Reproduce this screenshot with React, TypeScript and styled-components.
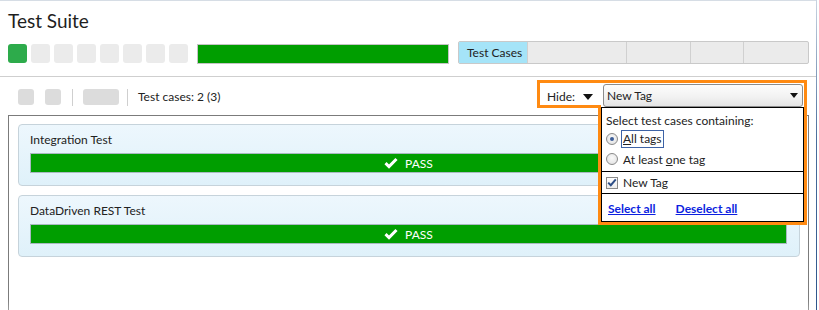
import styled, { createGlobalStyle } from "styled-components";

const STEPS = [true, false, false, false, false, false, false, false];

const TABS = [
  { label: "Test Cases", width: 69, active: true },
  { label: "", width: 99 },
  { label: "", width: 64 },
  { label: "", width: 53 },
  { label: "", width: 0 },
];

const TEST_CASES = ["Integration Test", "DataDriven REST Test"];

const ORANGE = "#ff8a12";

const GlobalStyle = createGlobalStyle`
  html, body {
    margin: 0;
    padding: 0;
    background: #fff;
  }
  body {
    color: #222;
    font-family: Lato, "Liberation Sans", sans-serif;
    overflow: hidden;
  }
`;

const Window = styled.div`
  background: #fff;
  display: flex;
  height: 310px;
  overflow: hidden;
  width: 819px;
`;

const Main = styled.div`
  border-top: 1px solid #d6dde5;
  flex-shrink: 0;
  width: 816px;
`;

const WindowEdge = styled.div`
  background: linear-gradient(to bottom, #c9d4e2, #4a6d9c 45%, #2e558c);
  flex-shrink: 0;
  width: 1px;
`;

const Header = styled.header`
  border-bottom: 1px solid #cfcfcf;
  padding: 8px 7px 12px 8px;
`;

const Title = styled.h1`
  color: #1e1e1e;
  font-size: 19px;
  font-weight: 400;
  line-height: 23px;
  margin: 0;
`;

const SummaryRow = styled.div`
  align-items: flex-end;
  display: flex;
  height: 23px;
  margin-top: 9px;
`;

const StepList = styled.div`
  display: flex;
  gap: 4px;
`;

const Step = styled.div<{ $done?: boolean }>`
  background: ${({ $done }) => ($done ? "#2dab4b" : "#ebebeb")};
  border-radius: 3px;
  height: 19px;
  margin-bottom: 1px;
  width: 19px;
`;

const ProgressBar = styled.div`
  background: #009e00;
  border: 1px solid #c4c4c4;
  box-sizing: border-box;
  height: 20px;
  margin-left: 9px;
  width: 252px;
`;

const Tabs = styled.div`
  background: #ebebeb;
  border: 1px solid #c9c9c9;
  border-radius: 2px;
  box-sizing: border-box;
  display: flex;
  flex: 1;
  height: 23px;
  margin-left: 9px;
  overflow: hidden;
`;

const Tab = styled.div<{ $active?: boolean; $width: number }>`
  background: ${({ $active }) => ($active ? "#a5e4f8" : "transparent")};
  border-right: 1px solid #d0d0d0;
  box-sizing: border-box;
  flex: ${({ $width }) => ($width ? `0 0 ${$width}px` : "1")};
  font-size: 12px;
  line-height: 21px;
  padding-left: 8px;
  &:last-child {
    border-right: none;
  }
`;

const Toolbar = styled.div`
  display: flex;
  height: 28px;
  margin-top: 3px;
  padding: 0 9px 0 18px;
  position: relative;
  z-index: 2;
`;

const LeftTools = styled.div`
  align-items: center;
  display: flex;
  padding-top: 6px;
`;

const ToolButton = styled.div<{ $wide?: boolean }>`
  background: #dcdcdc;
  border-radius: 3px;
  height: 16px;
  margin-right: ${({ $wide }) => ($wide ? "8px" : "11px")};
  width: ${({ $wide }) => ($wide ? "36px" : "16px")};
`;

const ToolSeparator = styled.div`
  background: #cfcfcf;
  height: 17px;
  margin-right: 10px;
  width: 1px;
`;

const CountText = styled.span`
  font-size: 12px;
  line-height: 16px;
  margin-left: 0;
`;

const HideControl = styled.div`
  align-items: flex-start;
  border: 3px solid ${ORANGE};
  border-bottom: none;
  box-sizing: border-box;
  display: flex;
  height: 28px;
  margin-left: auto;
  padding-left: 7px;
  position: relative;
  width: 270px;
  &::after {
    background: ${ORANGE};
    bottom: 0;
    content: "";
    height: 3px;
    left: -3px;
    position: absolute;
    width: 64px;
  }
`;

const HideLabel = styled.span`
  font-size: 12px;
  line-height: 16px;
  margin-top: 6px;
`;

const Caret = styled.span<{ $size: number }>`
  border-left: ${({ $size }) => $size}px solid transparent;
  border-right: ${({ $size }) => $size}px solid transparent;
  border-top: ${({ $size }) => Math.round($size * 1.2)}px solid #111;
  height: 0;
  width: 0;
`;

const HideCaret = styled.span`
  display: flex;
  margin-left: 8px;
  margin-top: 11px;
`;

const Select = styled.div`
  align-items: center;
  background: linear-gradient(to bottom, #fdfdfd, #f1f1f1 60%, #e4e4e4);
  border: 1px solid #8c8c8c;
  border-radius: 3px;
  box-sizing: border-box;
  display: flex;
  font-size: 12px;
  height: 23px;
  justify-content: space-between;
  margin-left: 10px;
  margin-top: 1px;
  padding: 0 4px 0 3px;
  width: 200px;
`;

const Popup = styled.div`
  background: #fff;
  border: 3px solid ${ORANGE};
  border-top: none;
  left: 58px;
  position: absolute;
  right: -3px;
  top: 24px;
`;

const PopupPanel = styled.div`
  border: 1px solid #000;
  font-size: 12px;
`;

const PopupSection = styled.div`
  border-bottom: 1px solid #000;
  padding: 5px 4px 2px 4px;
  &:last-child {
    border-bottom: none;
  }
`;

const PopupHeading = styled.div`
  line-height: 16px;
`;

const OptionRow = styled.label`
  align-items: center;
  display: flex;
  gap: 5px;
  height: 20px;
`;

const CheckRow = styled(OptionRow)`
  height: 21px;
`;

const Radio = styled.span<{ $checked?: boolean }>`
  align-items: center;
  background: radial-gradient(circle at 50% 40%, #fafafa, #dedede);
  border: 1px solid #8a8a8a;
  border-radius: 50%;
  box-sizing: border-box;
  display: flex;
  height: 12px;
  justify-content: center;
  width: 12px;
  &::after {
    background: ${({ $checked }) => ($checked ? "#3b5d98" : "transparent")};
    border-radius: 50%;
    content: "";
    height: 4px;
    width: 4px;
  }
`;

const FocusLabel = styled.span`
  border: 1px solid #3d63a6;
  line-height: 16px;
  margin-left: -2px;
  padding: 0 1px;
`;

const CheckBox = styled.span`
  align-items: center;
  background: linear-gradient(to bottom, #fff, #ececec);
  border: 1px solid #8a8a8a;
  box-sizing: border-box;
  display: flex;
  height: 12px;
  justify-content: center;
  width: 12px;
`;

const LinkRow = styled.div`
  display: flex;
  gap: 20px;
  line-height: 16px;
  padding: 7px 6px 4px;
`;

const Link = styled.a`
  color: #0c1fe0;
  cursor: pointer;
  font-weight: 700;
  text-decoration: underline;
`;

const Panel = styled.div`
  border: 1px solid #7b7b7b;
  border-image: linear-gradient(to bottom, #7b7b7b 80%, rgba(123, 123, 123, 0)) 1;
  display: flex;
  flex-direction: column;
  gap: 9px;
  height: 220px;
  margin: 7px 7px 0 8px;
  padding: 8px 8px 0 9px;
`;

const Card = styled.div`
  background: linear-gradient(to bottom, #edf7fd, #dff1fa);
  border: 1px solid #c6d3db;
  border-radius: 4px;
  padding: 7px 12px 12px 11px;
`;

const CardTitle = styled.div`
  font-size: 12px;
  line-height: 16px;
`;

const ResultBar = styled.div`
  align-items: center;
  background: #009e00;
  border: 1px solid #a9b9c1;
  box-sizing: border-box;
  color: #fff;
  display: flex;
  font-size: 12px;
  gap: 7px;
  height: 20px;
  justify-content: center;
  margin-top: 5px;
`;

function PassCheck() {
  return (
    <svg width="14" height="12" viewBox="0 0 14 12">
      <path d="M1.5 6.2 L5 9.6 L12.5 2" fill="none" stroke="#fff" strokeWidth="3" />
    </svg>
  );
}

function SmallCheck() {
  return (
    <svg width="10" height="9" viewBox="0 0 10 9">
      <path d="M1.2 4.6 L3.8 7.2 L8.8 1.4" fill="none" stroke="#2d4e86" strokeWidth="2" />
    </svg>
  );
}

export default function App(): JSX.Element {
  return (
    <Window>
      <GlobalStyle />
      <Main>
        <Header>
          <Title>Test Suite</Title>
          <SummaryRow>
            <StepList>
              {STEPS.map((done, i) => (
                <Step key={i} $done={done} />
              ))}
            </StepList>
            <ProgressBar />
            <Tabs>
              {TABS.map((tab, i) => (
                <Tab key={i} $active={tab.active} $width={tab.width}>
                  {tab.label}
                </Tab>
              ))}
            </Tabs>
          </SummaryRow>
        </Header>

        <Toolbar>
          <LeftTools>
            <ToolButton />
            <ToolButton />
            <ToolSeparator />
            <ToolButton $wide />
            <ToolSeparator />
            <CountText>Test cases: 2 (3)</CountText>
          </LeftTools>
          <HideControl>
            <HideLabel>Hide:</HideLabel>
            <HideCaret>
              <Caret $size={5} />
            </HideCaret>
            <Select>
              <span>New Tag</span>
              <Caret $size={4} />
            </Select>
            <Popup>
              <PopupPanel>
                <PopupSection>
                  <PopupHeading>Select test cases containing:</PopupHeading>
                  <OptionRow>
                    <Radio $checked />
                    <FocusLabel>
                      <u>A</u>ll tags
                    </FocusLabel>
                  </OptionRow>
                  <OptionRow>
                    <Radio />
                    <span>
                      At least <u>o</u>ne tag
                    </span>
                  </OptionRow>
                </PopupSection>
                <PopupSection style={{ padding: "0 4px" }}>
                  <CheckRow>
                    <CheckBox>
                      <SmallCheck />
                    </CheckBox>
                    <span>New Tag</span>
                  </CheckRow>
                </PopupSection>
                <LinkRow>
                  <Link>Select all</Link>
                  <Link>Deselect all</Link>
                </LinkRow>
              </PopupPanel>
            </Popup>
          </HideControl>
        </Toolbar>

        <Panel>
          {TEST_CASES.map(name => (
            <Card key={name}>
              <CardTitle>{name}</CardTitle>
              <ResultBar>
                <PassCheck />
                <span>PASS</span>
              </ResultBar>
            </Card>
          ))}
        </Panel>
      </Main>
      <WindowEdge />
    </Window>
  );
}
